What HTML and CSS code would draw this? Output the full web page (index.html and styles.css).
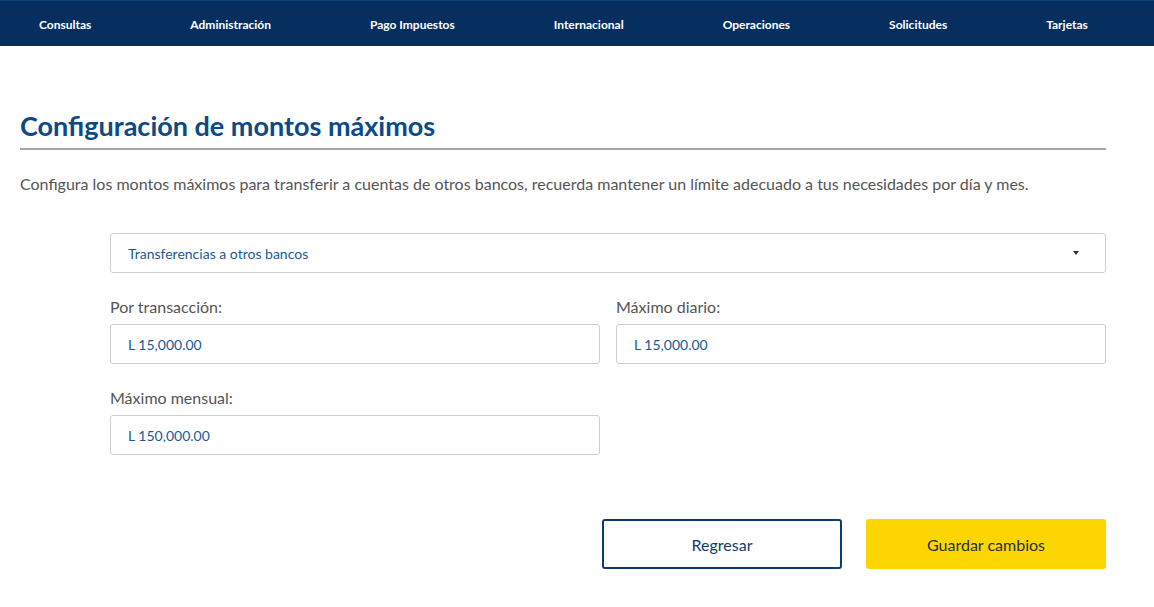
FILE: index.html
```html
<!DOCTYPE html>
<html lang="es">
<head>
  <meta charset="UTF-8">
  <meta name="viewport" content="width=device-width, initial-scale=1.0">
  <title>Configuración de montos máximos</title>
  <link rel="stylesheet" href="styles.css">
</head>
<body>
  <nav class="topnav">
    <a href="#">Consultas</a>
    <a href="#">Administración</a>
    <a href="#">Pago Impuestos</a>
    <a href="#">Internacional</a>
    <a href="#">Operaciones</a>
    <a href="#">Solicitudes</a>
    <a href="#">Tarjetas</a>
  </nav>

  <main class="content">
    <h1 class="title">Configuración de montos máximos</h1>
    <p class="intro">Configura los montos máximos para transferir a cuentas de otros bancos, recuerda mantener un límite adecuado a tus necesidades por día y mes.</p>

    <form class="limits">
      <div class="select">
        <span>Transferencias a otros bancos</span>
        <span class="caret"></span>
      </div>

      <div class="grid">
        <div class="field">
          <label>Por transacción:</label>
          <div class="input">L 15,000.00</div>
        </div>
        <div class="field">
          <label>Máximo diario:</label>
          <div class="input">L 15,000.00</div>
        </div>
        <div class="field">
          <label>Máximo mensual:</label>
          <div class="input">L 150,000.00</div>
        </div>
      </div>

      <div class="actions">
        <button type="button" class="btn btn-outline">Regresar</button>
        <button type="button" class="btn btn-primary">Guardar cambios</button>
      </div>
    </form>
  </main>
</body>
</html>
```

FILE: styles.css
```css
body {
  margin: 0;
  font-family: Lato, "Open Sans", "Liberation Sans", sans-serif;
  background: #fff;
}
.topnav {
  display: flex;
  align-items: center;
  gap: 99px;
  height: 46px;
  padding-left: 39px;
  padding-top: 2px;
  background: #062f5f;
  border-top: 1px solid #0d437c;
  box-sizing: border-box;
}
.topnav a {
  color: #fff;
  font-size: 12px;
  font-weight: 700;
  text-decoration: none;
}
.content {
  padding: 0 48px 0 20px;
}
.title {
  margin: 64px 0 0;
  padding-bottom: 6px;
  font-size: 27px;
  line-height: 32px;
  font-weight: 700;
  color: #0b4a86;
  border-bottom: 2px solid #a6a6a6;
}
.intro {
  margin: 23px 0 0;
  font-size: 16px;
  line-height: 22px;
  color: #555;
}
.limits {
  margin: 38px 0 0 90px;
}
.select {
  display: flex;
  align-items: center;
  justify-content: space-between;
  height: 40px;
  padding: 0 26px 0 17px;
  border: 1px solid #cfcfcf;
  border-radius: 3px;
  box-sizing: border-box;
  font-size: 14px;
  color: #185b96;
}
.caret {
  width: 0;
  height: 0;
  border-left: 3px solid transparent;
  border-right: 3px solid transparent;
  border-top: 4px solid #333;
}
.grid {
  display: grid;
  grid-template-columns: 1fr 1fr;
  column-gap: 16px;
  row-gap: 23px;
  margin-top: 23px;
}
.field label {
  display: block;
  font-size: 16px;
  line-height: 22px;
  color: #555;
  margin-bottom: 6px;
}
.input {
  display: flex;
  align-items: center;
  height: 40px;
  padding: 0 17px;
  border: 1px solid #cfcfcf;
  border-radius: 3px;
  box-sizing: border-box;
  font-size: 14px;
  color: #185b96;
}
.actions {
  display: flex;
  justify-content: flex-end;
  gap: 24px;
  margin-top: 64px;
}
.btn {
  width: 240px;
  height: 50px;
  border-radius: 3px;
  font-family: inherit;
  font-size: 16px;
  cursor: pointer;
}
.btn-outline {
  background: #fff;
  border: 2px solid #0d3d6f;
  color: #0d3d6f;
}
.btn-primary {
  background: #fdd600;
  border: none;
  color: #1d2f44;
}
```
